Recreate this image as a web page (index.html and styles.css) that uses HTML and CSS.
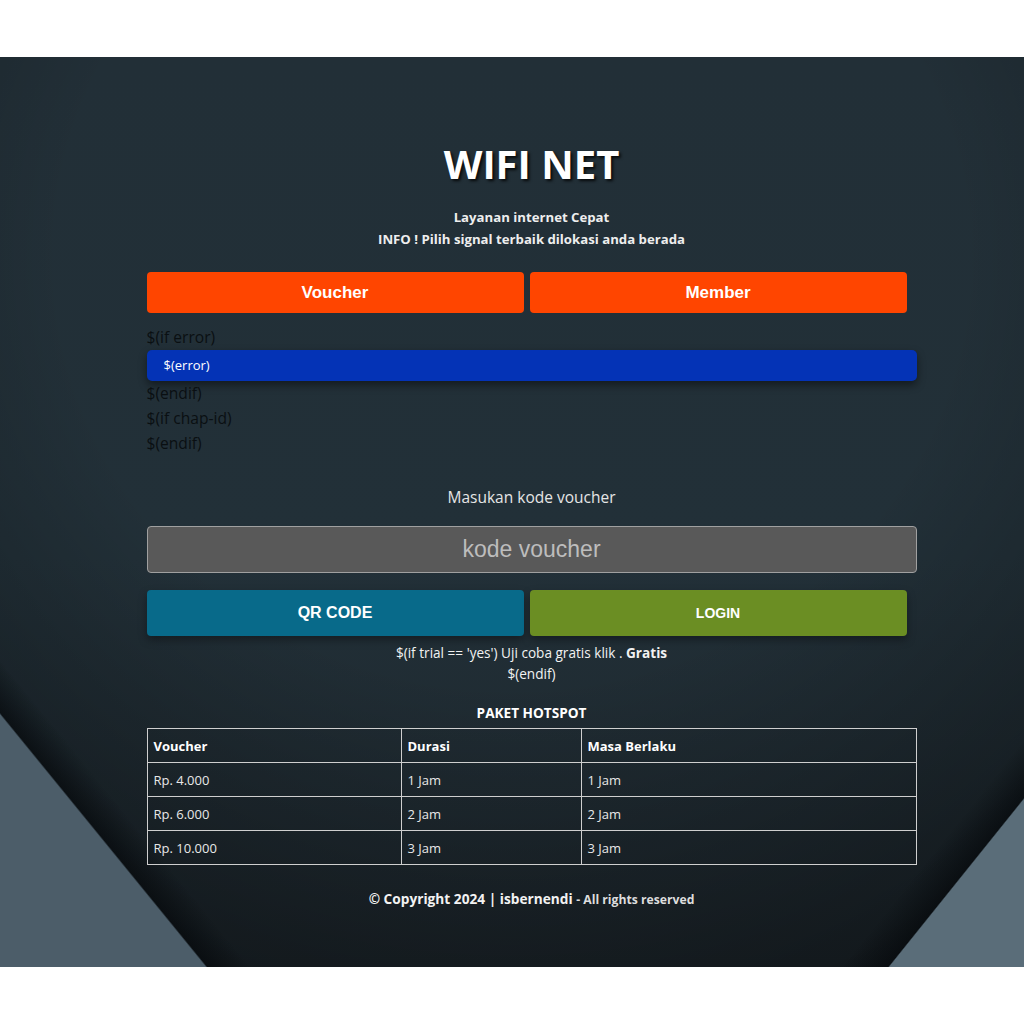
FILE: index.html
```html
<!DOCTYPE html>
<html lang="id">
<head>
<meta charset="utf-8">
<title>WIFI NET</title>
<link rel="stylesheet" href="styles.css">
</head>
<body>
<div class="stage">
  <div class="container">
    <h1 class="title">WIFI NET</h1>
    <div class="subtitle">
      <div>Layanan internet Cepat</div>
      <div>INFO ! Pilih signal terbaik dilokasi anda berada</div>
    </div>
    <div class="tabs">
      <button class="tab">Voucher</button>
      <button class="tab">Member</button>
    </div>
    <div class="tpl">
      <div class="tpl-line">$(if error)</div>
      <div class="error-bar">$(error)</div>
      <div class="tpl-line">$(endif)</div>
      <div class="tpl-line">$(if chap-id)</div>
      <div class="tpl-line">$(endif)</div>
    </div>
    <div class="prompt">Masukan kode voucher</div>
    <input class="code-input" type="text" placeholder="kode voucher">
    <div class="actions">
      <button class="btn btn-qr">QR CODE</button>
      <button class="btn btn-login">LOGIN</button>
    </div>
    <div class="trial">
      <div>$(if trial == 'yes') Uji coba gratis klik . <b>Gratis</b></div>
      <div>$(endif)</div>
    </div>
    <div class="paket-title">PAKET HOTSPOT</div>
    <table class="paket">
      <colgroup>
        <col class="c1"><col class="c2"><col class="c3">
      </colgroup>
      <thead>
        <tr><th>Voucher</th><th>Durasi</th><th>Masa Berlaku</th></tr>
      </thead>
      <tbody>
        <tr><td>Rp. 4.000</td><td>1 Jam</td><td>1 Jam</td></tr>
        <tr><td>Rp. 6.000</td><td>2 Jam</td><td>2 Jam</td></tr>
        <tr><td>Rp. 10.000</td><td>3 Jam</td><td>3 Jam</td></tr>
      </tbody>
    </table>
    <div class="footer">© Copyright 2024 | isbernendi <span class="rights">- All rights reserved</span></div>
  </div>
</div>
</body>
</html>
```
FILE: styles.css
```css
html, body {
  margin: 0;
  padding: 0;
  background: #ffffff;
}

body {
  font-family: "Open Sans", "Noto Sans", sans-serif;
}

.stage {
  box-sizing: border-box;
  margin-top: 57px;
  height: 910px;
  padding-left: 39px;
  background-color: #222f37;
  background-image:
    linear-gradient(to bottom left, rgba(0,0,0,0) 45.5%, rgba(5,8,11,0.65) 49.8%, #4c5d69 50%),
    linear-gradient(to bottom right, rgba(0,0,0,0) 44%, rgba(5,8,11,0.65) 49.8%, #5a6d79 50%),
    radial-gradient(ellipse 80% 85% at 50% 22%, rgba(0,0,0,0) 55%, rgba(0,0,0,0.34) 100%),
    linear-gradient(to bottom, #222f37 0%, #223038 55%, #1c252b 100%);
  background-size: 500px 613px, 400px 498px, 100% 100%, 100% 100%;
  background-position: -150px 474px, 724px 618px, 0 0, 0 0;
  background-repeat: no-repeat;
}

.container {
  width: 770px;
  margin: 0 auto;
  padding-top: 84px;
  color: #ffffff;
}

.title {
  margin: 0;
  font-size: 40px;
  line-height: 46px;
  font-weight: 700;
  text-align: center;
  color: #ffffff;
  text-shadow: 2px 2px 3px rgba(0,0,0,0.8);
}

.subtitle {
  margin-top: 19px;
  font-size: 13.2px;
  line-height: 22px;
  font-weight: 700;
  text-align: center;
  color: #eeeeee;
}

.tabs {
  display: flex;
  gap: 6px;
  margin-top: 22px;
}

.tab {
  width: 377px;
  height: 41px;
  border: none;
  border-radius: 4px;
  background: #ff4500;
  color: #ffffff;
  font-family: "Liberation Sans", Arial, sans-serif;
  font-size: 17px;
  font-weight: 700;
  padding: 0;
}

.tpl {
  margin-top: 12px;
  font-size: 15.6px;
  line-height: 25px;
  color: #0a0f12;
}

.error-bar {
  height: 31px;
  line-height: 31px;
  padding-left: 17px;
  border-radius: 5px;
  background: #0433b6;
  color: #ffffff;
  font-size: 13px;
  box-shadow: 0 4px 8px rgba(0,0,0,0.45);
}

.prompt {
  margin-top: 29px;
  font-size: 15.5px;
  line-height: 24px;
  text-align: center;
  color: #e6e6e6;
}

.code-input {
  display: block;
  box-sizing: border-box;
  width: 770px;
  height: 47px;
  margin-top: 17px;
  border: 1.5px solid #a0a0a0;
  border-radius: 4px;
  background: #595959;
  color: #ffffff;
  font-family: "Liberation Sans", Arial, sans-serif;
  font-size: 23px;
  text-align: center;
  outline: none;
}

.code-input::placeholder {
  color: #bdbdbd;
  opacity: 1;
}

.actions {
  display: flex;
  gap: 6px;
  margin-top: 17px;
}

.btn {
  width: 377px;
  height: 46px;
  border: none;
  border-radius: 4px;
  color: #ffffff;
  font-family: "Liberation Sans", Arial, sans-serif;
  font-weight: 700;
  padding: 0;
  box-shadow: 0 4px 8px rgba(0,0,0,0.35);
}

.btn-qr {
  background: #086a8a;
  font-size: 16px;
}

.btn-login {
  background: #6b8e23;
  font-size: 14px;
}

.trial {
  margin-top: 6px;
  font-size: 13.6px;
  line-height: 21px;
  text-align: center;
  color: #f2f2f2;
}

.paket-title {
  margin-top: 19px;
  font-size: 13.6px;
  line-height: 20px;
  font-weight: 700;
  text-align: center;
}

.paket {
  width: 770px;
  margin-top: 5px;
  border-collapse: collapse;
  font-size: 13px;
  color: #e8e8e8;
}

.paket .c1 { width: 254px; }
.paket .c2 { width: 180px; }

.paket th,
.paket td {
  height: 33px;
  padding: 0 6px;
  border: 1px solid #cfcfcf;
  text-align: left;
}

.paket th {
  font-weight: 700;
  color: #ffffff;
}

.footer {
  margin-top: 24px;
  font-size: 13.7px;
  line-height: 20px;
  font-weight: 700;
  text-align: center;
  color: #f2f2f2;
}

.rights {
  font-size: 12.2px;
  color: #dddddd;
}
```
